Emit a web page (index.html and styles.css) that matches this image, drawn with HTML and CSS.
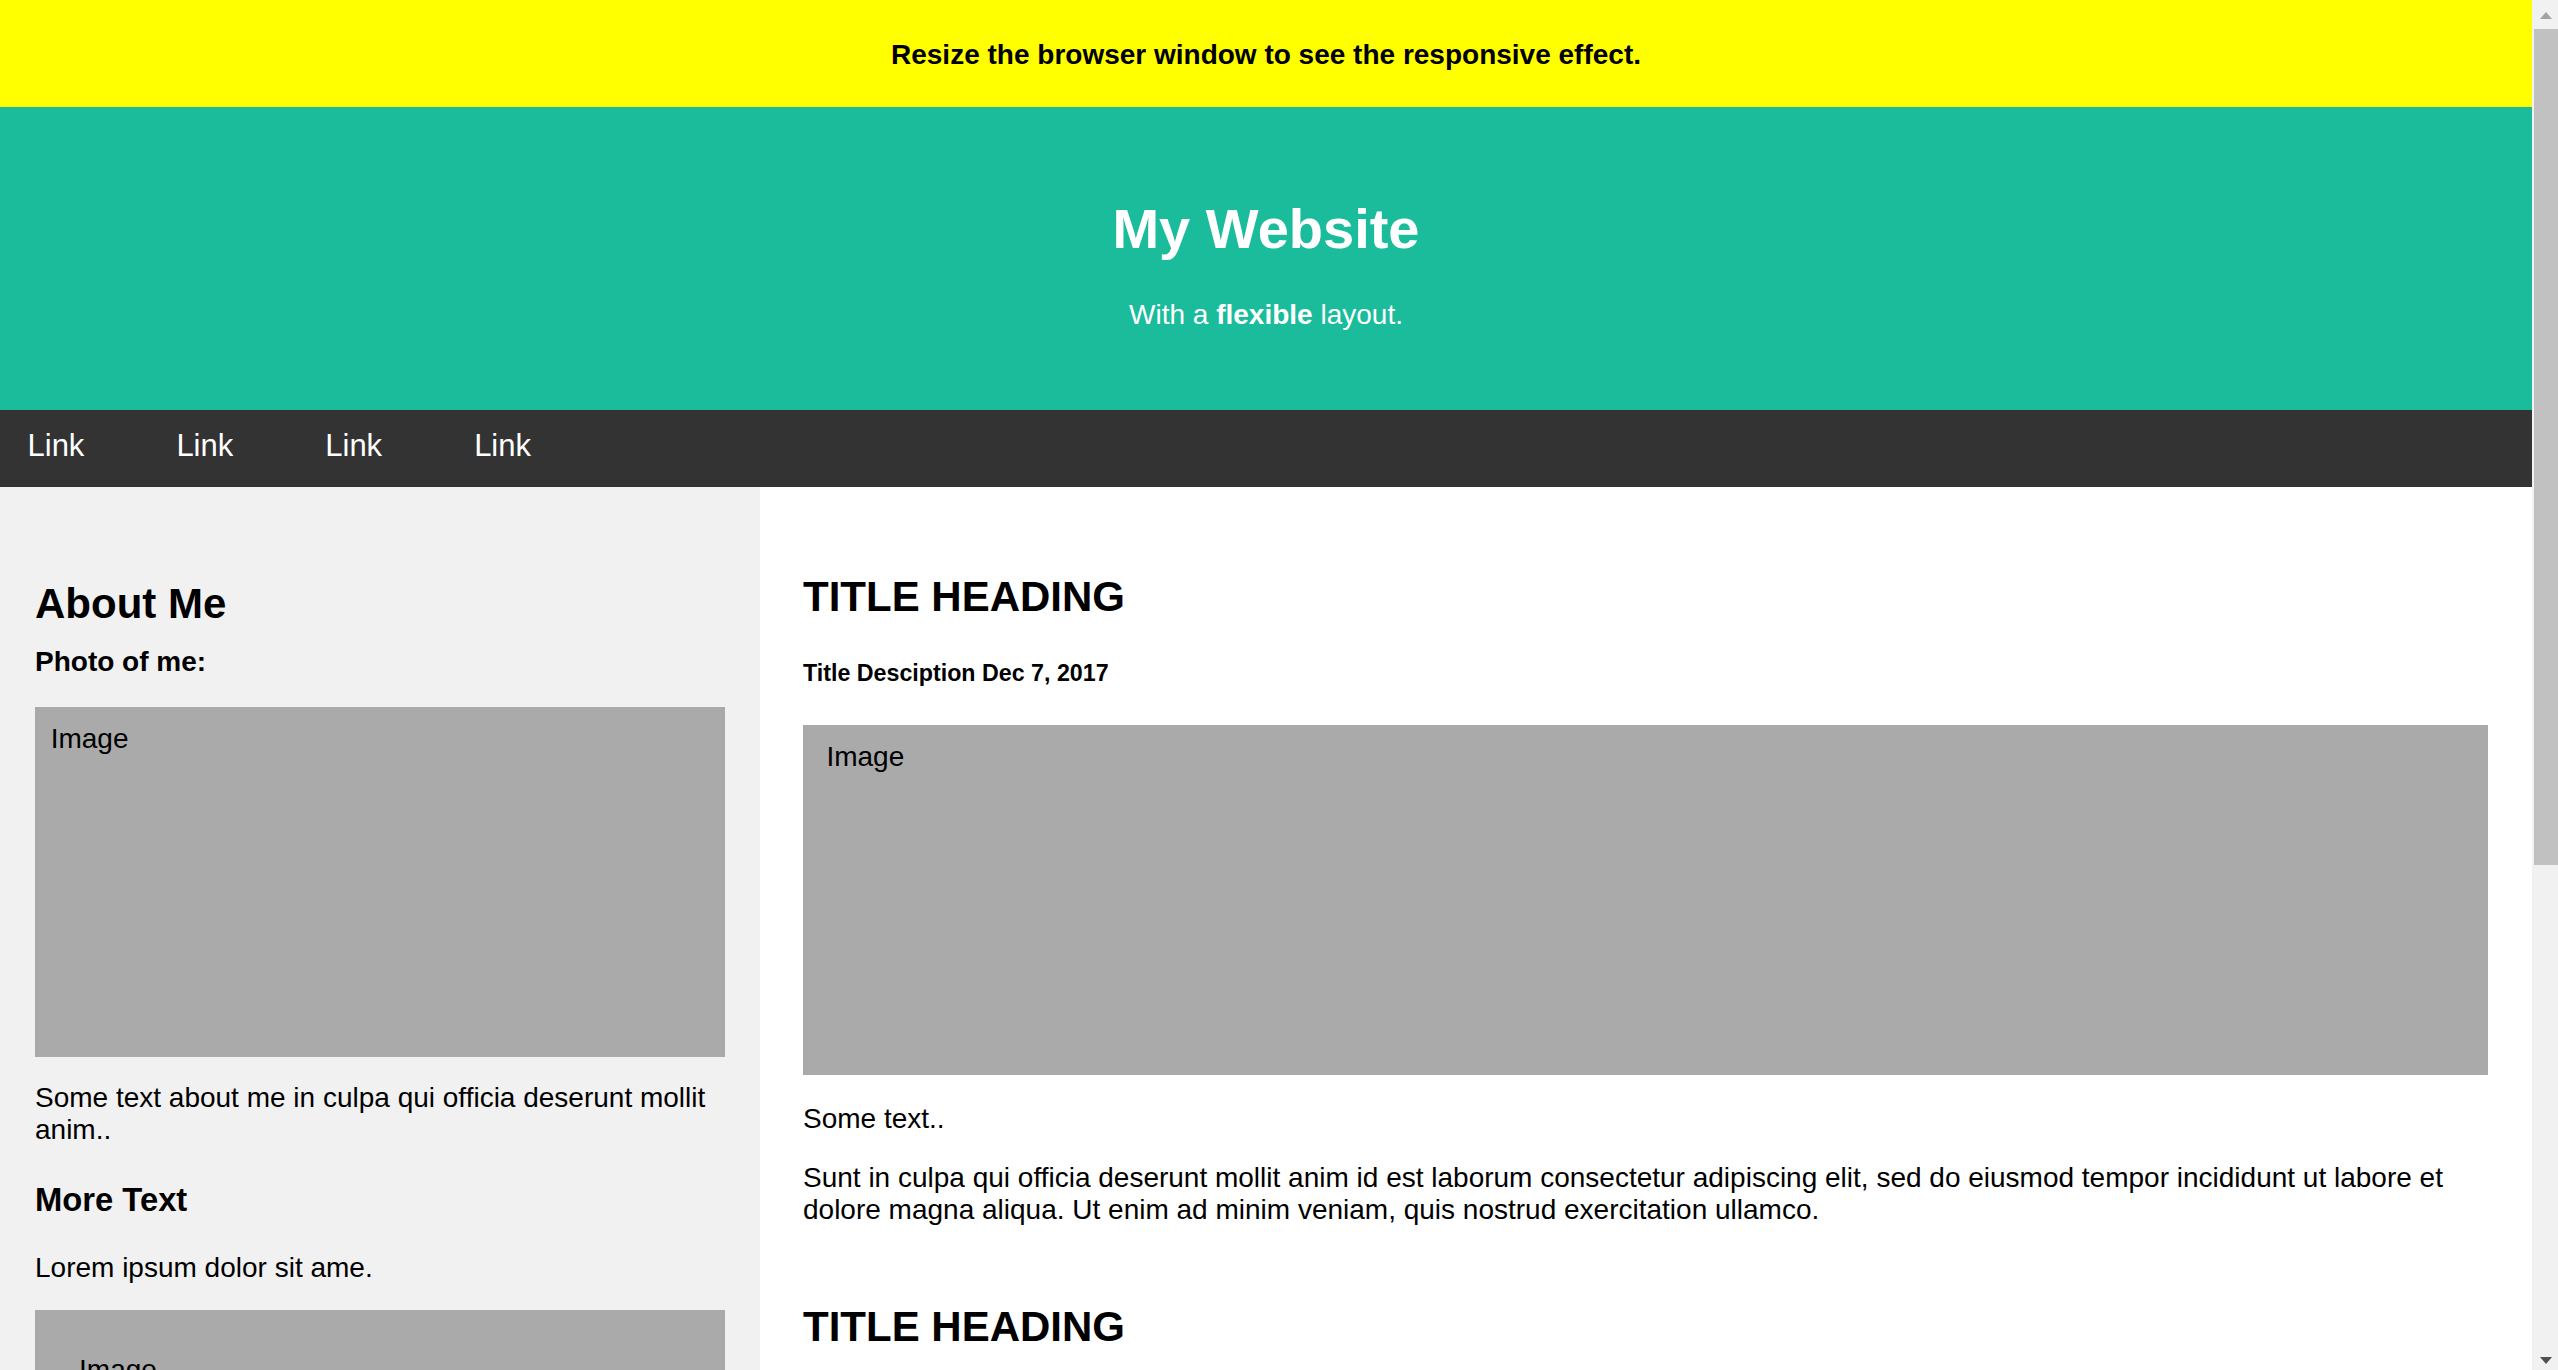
FILE: index.html
```html
<!DOCTYPE html>
<html lang="en">
<head>
<meta charset="utf-8">
<title>My Website</title>
<link rel="stylesheet" href="styles.css">
</head>
<body>
<div class="window">
  <div class="page">
    <div class="banner">
      <h4 class="banner-text">Resize the browser window to see the responsive effect.</h4>
    </div>
    <header class="header">
      <h1 class="site-title">My Website</h1>
      <p class="tagline">With a <b>flexible</b> layout.</p>
    </header>
    <nav class="navbar">
      <a class="nav-link" href="#">Link</a>
      <a class="nav-link" href="#">Link</a>
      <a class="nav-link" href="#">Link</a>
      <a class="nav-link" href="#">Link</a>
    </nav>
    <div class="row">
      <aside class="side">
        <h2 class="side-title">About Me</h2>
        <h4 class="side-sub">Photo of me:</h4>
        <div class="fakeimg side-img">Image</div>
        <p class="side-text">Some text about me in culpa qui officia deserunt mollit anim..</p>
        <h3 class="side-h3">More Text</h3>
        <p class="side-lorem">Lorem ipsum dolor sit ame.</p>
        <div class="fakeimg side-img2">Image</div>
      </aside>
      <main class="main">
        <h2 class="post-title">TITLE HEADING</h2>
        <h5 class="post-meta">Title Desciption Dec 7, 2017</h5>
        <div class="fakeimg main-img">Image</div>
        <p class="post-lead">Some text..</p>
        <p class="post-body">Sunt in culpa qui officia deserunt mollit anim id est laborum consectetur adipiscing elit, sed do eiusmod tempor incididunt ut labore et dolore magna aliqua. Ut enim ad minim veniam, quis nostrud exercitation ullamco.</p>
        <h2 class="post-title post-next">TITLE HEADING</h2>
      </main>
    </div>
  </div>
  <div class="scrollbar">
    <div class="sb-up"><span class="tri-up"></span></div>
    <div class="sb-thumb"></div>
    <div class="sb-track"></div>
    <div class="sb-down"><span class="tri-down"></span></div>
  </div>
</div>
</body>
</html>
```
FILE: styles.css
```css
* {
  box-sizing: border-box;
}

html,
body {
  margin: 0;
  height: 100%;
}

body {
  font-family: "Liberation Sans", Arial, sans-serif;
  font-size: 28px;
  line-height: normal;
  color: #000;
  overflow: hidden;
}

.window {
  display: flex;
  height: 100vh;
}

.page {
  flex: 1;
  min-width: 0;
  overflow: hidden;
  display: flex;
  flex-direction: column;
}

/* yellow banner */
.banner {
  flex-shrink: 0;
  height: 107px;
  padding-top: 39px;
  background: #ffff00;
}

.banner-text {
  margin: 0;
  font-size: 28px;
  font-weight: bold;
  text-align: center;
}

/* header */
.header {
  flex-shrink: 0;
  height: 303px;
  padding-top: 88.8px;
  background: #1abc9c;
  color: #fff;
  text-align: center;
}

.site-title {
  margin: 0;
  font-size: 56px;
  font-weight: bold;
}

.tagline {
  margin: 38.2px 0 0;
  font-size: 28px;
}

/* nav */
.navbar {
  flex-shrink: 0;
  display: flex;
  gap: 37px;
  height: 77px;
  background: #333;
}

.nav-link {
  padding: 17.8px 27.5px 0;
  font-size: 31px;
  color: #fff;
  text-decoration: none;
}

/* content row */
.row {
  flex: 1;
  min-height: 0;
  display: flex;
}

.side {
  flex-shrink: 0;
  width: 760px;
  padding: 92.8px 35px 0;
  background: #f1f1f1;
}

.main {
  flex: 1;
  min-width: 0;
  padding: 85.5px 44px 0 43px;
  background: #fff;
}

.fakeimg {
  height: 350px;
  background: #aaa;
  font-size: 28px;
}

.side-title,
.post-title {
  margin: 0;
  font-size: 42px;
  font-weight: bold;
}

.side-sub {
  margin: 18.3px 0 0;
  font-size: 28px;
  font-weight: bold;
}

.side-img {
  margin-top: 28.6px;
  padding: 16.5px 16px 0 15.7px;
}

.side-text {
  margin: 25.2px 0 0;
}

.side-h3 {
  margin: 35.3px 0 0;
  font-size: 32.76px;
  font-weight: bold;
}

.side-lorem {
  margin: 32.8px 0 0;
}

.side-img2 {
  margin-top: 25.7px;
  padding: 44.3px 44px 0 44.1px;
}

.post-meta {
  margin: 39.3px 0 0;
  font-size: 23.24px;
  font-weight: bold;
}

.main-img {
  margin-top: 38.2px;
  padding: 16.5px 23.4px 0 23.4px;
}

.post-lead {
  margin: 28px 0 0;
}

.post-body {
  margin: 26.8px 0 0;
}

.post-next {
  margin-top: 76.8px;
}

/* fake scrollbar */
.scrollbar {
  flex-shrink: 0;
  width: 26px;
  display: flex;
  flex-direction: column;
  background: #f1f1f1;
}

.sb-up {
  flex-shrink: 0;
  height: 29px;
  padding: 12px 0 0 8px;
}

.tri-up {
  display: block;
  width: 0;
  height: 0;
  border-left: 6.5px solid transparent;
  border-right: 6.5px solid transparent;
  border-bottom: 7px solid #a3a3a3;
}

.sb-thumb {
  flex-shrink: 0;
  height: 836px;
  margin-left: 2px;
  background: #c1c1c1;
}

.sb-track {
  flex: 1;
}

.sb-down {
  flex-shrink: 0;
  height: 13.3px;
  padding-left: 8px;
}

.tri-down {
  display: block;
  width: 0;
  height: 0;
  border-left: 6.5px solid transparent;
  border-right: 6.5px solid transparent;
  border-top: 7px solid #505050;
}
```
